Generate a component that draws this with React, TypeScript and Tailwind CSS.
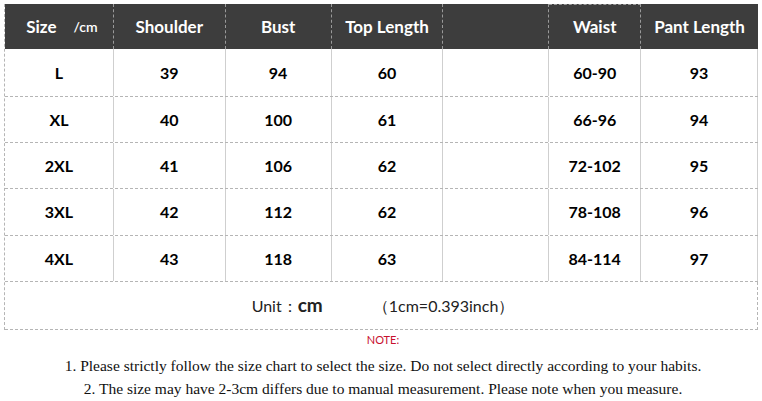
const cols = ["w-[109px]", "w-[112px]", "w-[106px]", "w-[112px]", "w-[106px]", "w-[92px]", "w-[117px]"];

const rows = [
  { h: "h-[48px]", cells: ["L", "39", "94", "60", "", "60-90", "93"] },
  { h: "h-[46px]", cells: ["XL", "40", "100", "61", "", "66-96", "94"] },
  { h: "h-[46px]", cells: ["2XL", "41", "106", "62", "", "72-102", "95"] },
  { h: "h-[47px]", cells: ["3XL", "42", "112", "62", "", "78-108", "96"] },
  { h: "h-[46px]", cells: ["4XL", "43", "118", "63", "", "84-114", "97"] },
];

export default function App() {
  return (
    <div
      className="h-[401px] w-[762px] overflow-hidden bg-white pl-[4px] pt-[4px]"
      style={{ fontFamily: "Lato, 'Open Sans', sans-serif" }}
    >
      <div className="w-[754px] border-l border-dashed border-[#b5b5b5]">
        {/* header */}
        <div className="flex h-[45px] bg-[#3d3d3d] text-[17px] font-bold text-white">
          <div className={`${cols[0]} flex items-center justify-center gap-[17px] border-r border-dashed border-[#9a9a9a] pl-[6px]`}>
            <span>Size</span>
            <span className="text-[14px] font-semibold">/cm</span>
          </div>
          <div className={`${cols[1]} flex items-center justify-center border-r border-dashed border-[#9a9a9a]`}>Shoulder</div>
          <div className={`${cols[2]} flex items-center justify-center border-r border-dashed border-[#9a9a9a]`}>Bust</div>
          <div className={`${cols[3]} flex items-center justify-center border-r border-dashed border-[#9a9a9a]`}>Top Length</div>
          <div className={`${cols[4]} border-r border-dashed border-[#9a9a9a]`} />
          <div className={`${cols[5]} flex items-center justify-center border-r border-t border-dashed border-[#9a9a9a]`}>Waist</div>
          <div className={`${cols[6]} flex items-center justify-center`}>Pant Length</div>
        </div>

        {rows.map((row) => (
          <div key={row.cells[0]} className={`${row.h} flex border-b border-dashed border-[#b5b5b5] text-[16px] font-bold text-black`}>
            {row.cells.map((cell, i) => (
              <div
                key={i}
                className={`${cols[i]} flex items-center justify-center border-r border-solid border-[#cfcfcf]`}
              >
                {cell}
              </div>
            ))}
          </div>
        ))}

        <div className="flex h-[48px] items-center justify-center border-b border-r border-dashed border-[#b5b5b5] text-[16px] text-[#222]">
          <span className="ml-[4px]">Unit：</span>
          <span className="text-[19px] font-bold">cm</span>
          <span className="ml-[50px]">（1cm=0.393inch）</span>
        </div>
      </div>

      <div className="mt-[2px] text-center text-[11px] text-[#c8102e]">NOTE:</div>
      <div
        className="mt-[7px] flex flex-col items-center gap-[4px] text-[15.5px] leading-[19px] text-[#111]"
        style={{ fontFamily: "'Liberation Serif', 'DejaVu Serif', serif" }}
      >
        <div>1. Please strictly follow the size chart to select the size. Do not select directly according to your habits.</div>
        <div>2. The size may have 2-3cm differs due to manual measurement. Please note when you measure.</div>
      </div>
    </div>
  );
}
